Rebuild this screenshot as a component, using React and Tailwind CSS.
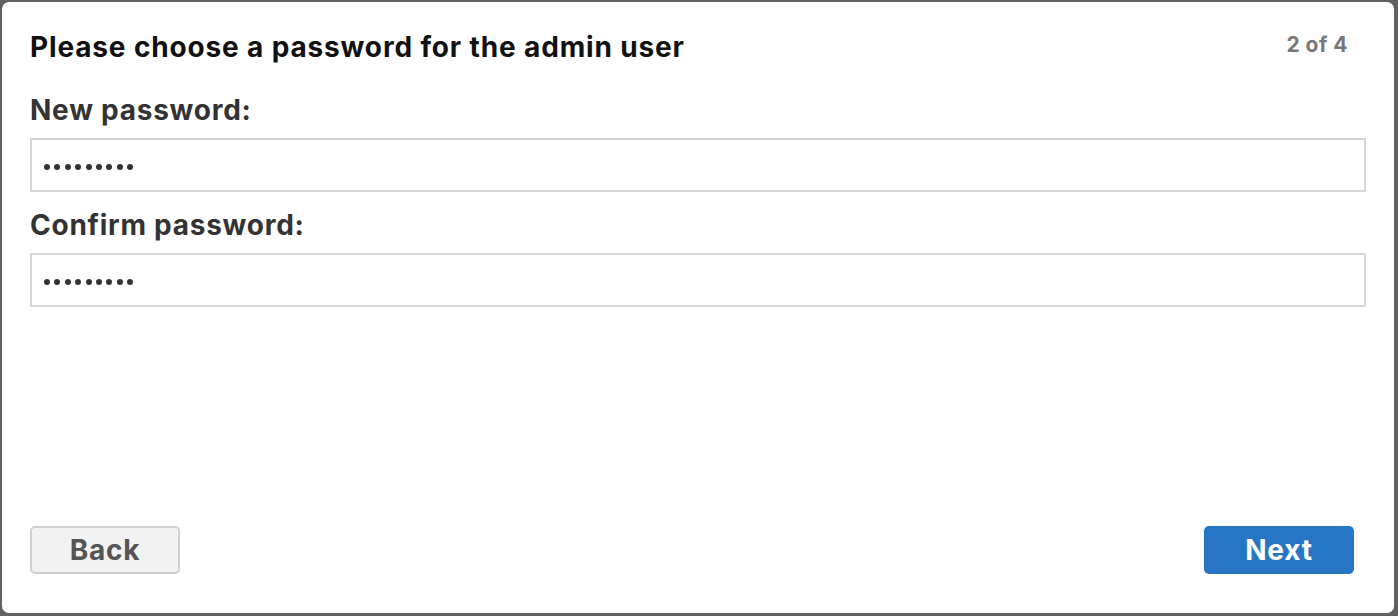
import React from 'react';

const font = { fontFamily: 'Inter, "Open Sans", sans-serif' };

function Dots() {
  return (
    <div className="flex items-center gap-[4.4px]">
      {Array.from({ length: 9 }).map((_, i) => (
        <span key={i} className="block w-[6px] h-[6px] rounded-full bg-[#333]" />
      ))}
    </div>
  );
}

function PasswordField({ label }) {
  return (
    <div className="flex flex-col">
      <label className="text-[28px] leading-[34px] tracking-[0.75px] font-bold text-[#333] mb-[11px]">{label}</label>
      <div className="h-[54px] border-2 border-[#d6d6d6] px-[12px] pt-[4px] flex items-center">
        <Dots />
      </div>
    </div>
  );
}

export default function App() {
  return (
    <div
      className="w-[1398px] h-[616px] bg-[#616161] pl-[2px] pt-[2px] pr-[4px] pb-[3px]"
      style={font}
    >
      <div className="h-full bg-white rounded-[7px] px-[28px] pt-[28px] pb-[39px] flex flex-col">
        <div className="flex justify-between items-start">
          <h1 className="text-[28px] leading-[34px] tracking-[0.85px] font-bold text-[#111]">
            Please choose a password for the admin user
          </h1>
          <span className="text-[21px] leading-[24px] tracking-[0.5px] font-bold text-[#777] mt-[3px] mr-[18px]">2 of 4</span>
        </div>
        <div className="mt-[29px] flex flex-col gap-[16px]">
          <PasswordField label="New password:" />
          <PasswordField label="Confirm password:" />
        </div>
        <div className="flex-1" />
        <div className="flex justify-between">
          <button className="w-[150px] h-[48px] rounded-[5px] bg-[#f2f2f2] border-2 border-[#cfcfcf] text-[#555] text-[28px] tracking-[0.8px] font-bold">
            Back
          </button>
          <button className="w-[150px] h-[48px] rounded-[5px] bg-[#2776c6] text-white text-[28px] tracking-[0.8px] font-bold mr-[12px]">
            Next
          </button>
        </div>
      </div>
    </div>
  );
}
